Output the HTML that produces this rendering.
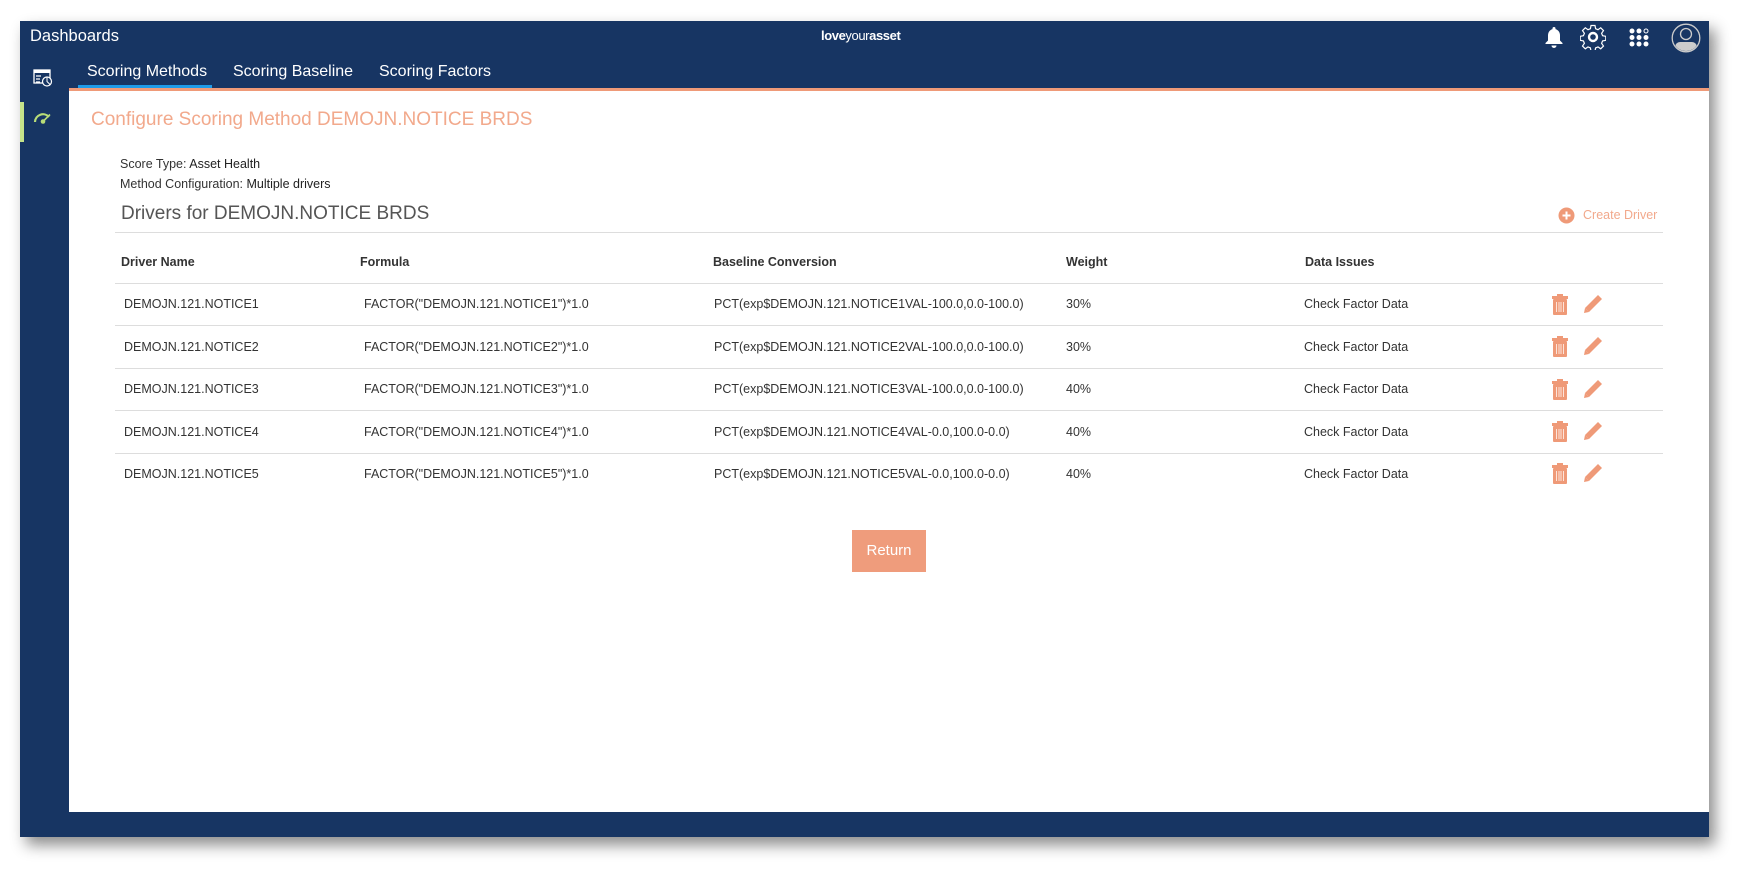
<!DOCTYPE html>
<html><head><meta charset="utf-8"><style>
*{margin:0;padding:0;box-sizing:border-box}
body{width:1750px;height:878px;background:#fff;position:relative;overflow:hidden;font-family:"Liberation Sans",sans-serif;color:#333}
.a{position:absolute;white-space:nowrap}
#frame{position:absolute;left:20px;top:21px;width:1689px;height:816px;background:#173563;box-shadow:6px 8px 14px rgba(0,0,0,.45)}
#white{position:absolute;left:69px;top:91px;width:1640px;height:721px;background:#fff}
.tab{color:#fff;font-size:16px;top:63px}
.t{font-size:12.5px;color:#333}
.h{font-size:12.5px;font-weight:bold;color:#333}
.ln{position:absolute;left:115px;width:1548px;height:1px;background:#ddd}
</style></head><body>
<div id="frame"></div>
<div class="a" style="left:69px;top:88px;width:1640px;height:3px;background:#ef9a78"></div>
<div id="white"></div>
<div class="a" style="left:30px;top:27px;color:#fff;font-size:16.5px">Dashboards</div>
<div class="a" style="left:821px;top:28px;color:#fff;font-size:13px;letter-spacing:-0.4px"><b>love</b>your<b>asset</b></div>
<svg class="a" style="left:1545px;top:26px" width="18" height="22" viewBox="0 0 18 22"><path d="M9 1a1.5 1.5 0 0 1 1.5 1.5v.6C13.5 4 15 6.5 15 9.5v5l2.5 2.5v1h-17v-1L3 14.5v-5C3 6.5 4.5 4 7.5 3.1v-.6A1.5 1.5 0 0 1 9 1zM6.5 19.5h5a2.5 2.5 0 0 1-5 0z" fill="#fff"/></svg>
<svg class="a" style="left:1580px;top:24px" width="26" height="26" viewBox="0 0 26 26"><path d="M11 1.5h4l.6 3.2 2.4 1 2.7-1.9 2.8 2.8-1.9 2.7 1 2.4 3.2.6v4l-3.2.6-1 2.4 1.9 2.7-2.8 2.8-2.7-1.9-2.4 1-.6 3.2h-4l-.6-3.2-2.4-1-2.7 1.9-2.8-2.8 1.9-2.7-1-2.4-3.2-.6v-4l3.2-.6 1-2.4-1.9-2.7 2.8-2.8 2.7 1.9 2.4-1z" fill="none" stroke="#fff" stroke-width="1.2"/><circle cx="13" cy="13" r="4" fill="none" stroke="#fff" stroke-width="2.4"/></svg>
<svg class="a" style="left:1629px;top:28px" width="22" height="19" viewBox="0 0 22 19"><g fill="#fff"><circle cx="3" cy="3" r="2.5"/><circle cx="10" cy="3" r="2.5"/><circle cx="3" cy="9.5" r="2.5"/><circle cx="10" cy="9.5" r="2.5"/><circle cx="17" cy="9.5" r="2.5"/><circle cx="3" cy="16" r="2.5"/><circle cx="10" cy="16" r="2.5"/><circle cx="17" cy="16" r="2.5"/></g><circle cx="17" cy="3" r="2" fill="none" stroke="#fff" stroke-width="1"/></svg>
<svg class="a" style="left:1671px;top:23px" width="30" height="30" viewBox="0 0 30 30"><defs><clipPath id="c"><circle cx="15" cy="15" r="13"/></clipPath></defs><circle cx="15" cy="15" r="13.8" fill="none" stroke="#ccc" stroke-width="1.3"/><circle cx="15" cy="11" r="5.5" fill="none" stroke="#ccc" stroke-width="1.3"/><rect x="4" y="19" width="22" height="12" rx="5" fill="#ccc" clip-path="url(#c)"/></svg>
<svg class="a" style="left:33px;top:69px" width="20" height="18" viewBox="0 0 20 18"><rect x="1" y="1" width="16" height="13" fill="none" stroke="#fff" stroke-width="1.3"/><rect x="1" y="1" width="16" height="3" fill="#fff"/><path d="M3 7h5M3 10h4M3 13h4" stroke="#fff" stroke-width="1.2"/><circle cx="14" cy="12.5" r="4.5" fill="#173563" stroke="#fff" stroke-width="1.2"/><path d="M14 8v4.5l3 3" stroke="#fff" stroke-width="1" fill="none"/></svg>
<div class="a" style="left:20px;top:102px;width:4px;height:40px;background:#c5e38a"></div>
<svg class="a" style="left:33px;top:111px" width="20" height="14" viewBox="0 0 20 14"><path d="M2 11a8 8 0 0 1 14-5" fill="none" stroke="#b8dd78" stroke-width="2.2"/><circle cx="10" cy="10.5" r="2.3" fill="#b8dd78"/><path d="M10 10.5l7-7" stroke="#b8dd78" stroke-width="1.6"/></svg>
<div class="a tab" style="left:87px">Scoring Methods</div>
<div class="a" style="left:78px;top:85px;width:134px;height:3px;background:#1f9be8"></div>
<div class="a tab" style="left:233px">Scoring Baseline</div>
<div class="a tab" style="left:379px">Scoring Factors</div>
<div class="a" style="left:91px;top:109px;font-size:19px;color:#f2a98c">Configure Scoring Method DEMOJN.NOTICE BRDS</div>
<div class="a t" style="left:120px;top:157px;font-size:12.5px">Score Type: <span style="color:#222">Asset Health</span></div>
<div class="a t" style="left:120px;top:177px;font-size:12.5px">Method Configuration: <span style="color:#222">Multiple drivers</span></div>
<div class="a" style="left:121px;top:203px;font-size:19px;color:#555">Drivers for DEMOJN.NOTICE BRDS</div>
<div class="ln" style="top:232px"></div>
<svg class="a" style="left:1558px;top:207px" width="17" height="17" viewBox="0 0 17 17"><circle cx="8.5" cy="8.5" r="8" fill="#ef9a78"/><path d="M8.5 4.5v8M4.5 8.5h8" stroke="#fff" stroke-width="2"/></svg>
<div class="a" style="left:1583px;top:208px;font-size:12.5px;color:#f2a98c">Create Driver</div>
<div class="a h" style="left:121px;top:255px">Driver Name</div>
<div class="a h" style="left:360px;top:255px">Formula</div>
<div class="a h" style="left:713px;top:255px">Baseline Conversion</div>
<div class="a h" style="left:1066px;top:255px">Weight</div>
<div class="a h" style="left:1305px;top:255px">Data Issues</div>
<div class="ln" style="top:283px"></div>
<div class="a t" style="left:124px;top:297px">DEMOJN.121.NOTICE1</div><div class="a t" style="left:364px;top:297px">FACTOR("DEMOJN.121.NOTICE1")*1.0</div><div class="a t" style="left:714px;top:297px">PCT(exp$DEMOJN.121.NOTICE1VAL-100.0,0.0-100.0)</div><div class="a t" style="left:1066px;top:297px">30%</div><div class="a t" style="left:1304px;top:297px">Check Factor Data</div><div class="ln" style="top:325px"></div>
<div class="a t" style="left:124px;top:340px">DEMOJN.121.NOTICE2</div><div class="a t" style="left:364px;top:340px">FACTOR("DEMOJN.121.NOTICE2")*1.0</div><div class="a t" style="left:714px;top:340px">PCT(exp$DEMOJN.121.NOTICE2VAL-100.0,0.0-100.0)</div><div class="a t" style="left:1066px;top:340px">30%</div><div class="a t" style="left:1304px;top:340px">Check Factor Data</div><div class="ln" style="top:368px"></div>
<div class="a t" style="left:124px;top:382px">DEMOJN.121.NOTICE3</div><div class="a t" style="left:364px;top:382px">FACTOR("DEMOJN.121.NOTICE3")*1.0</div><div class="a t" style="left:714px;top:382px">PCT(exp$DEMOJN.121.NOTICE3VAL-100.0,0.0-100.0)</div><div class="a t" style="left:1066px;top:382px">40%</div><div class="a t" style="left:1304px;top:382px">Check Factor Data</div><div class="ln" style="top:410px"></div>
<div class="a t" style="left:124px;top:425px">DEMOJN.121.NOTICE4</div><div class="a t" style="left:364px;top:425px">FACTOR("DEMOJN.121.NOTICE4")*1.0</div><div class="a t" style="left:714px;top:425px">PCT(exp$DEMOJN.121.NOTICE4VAL-0.0,100.0-0.0)</div><div class="a t" style="left:1066px;top:425px">40%</div><div class="a t" style="left:1304px;top:425px">Check Factor Data</div><div class="ln" style="top:453px"></div>
<div class="a t" style="left:124px;top:467px">DEMOJN.121.NOTICE5</div><div class="a t" style="left:364px;top:467px">FACTOR("DEMOJN.121.NOTICE5")*1.0</div><div class="a t" style="left:714px;top:467px">PCT(exp$DEMOJN.121.NOTICE5VAL-0.0,100.0-0.0)</div><div class="a t" style="left:1066px;top:467px">40%</div><div class="a t" style="left:1304px;top:467px">Check Factor Data</div>
<svg class="a" style="left:1552px;top:294px" width="16" height="21" viewBox="0 0 16 21"><rect x="5" y="0" width="6" height="2" fill="#ef9a78"/><rect x="0" y="2" width="16" height="3" fill="#ef9a78"/><rect x="1" y="5" width="14" height="16" rx="1" fill="#ef9a78"/><path d="M4.5 8v10M7 8v10M9 8v10M11.5 8v10" stroke="#fde4da" stroke-width="1"/></svg>
<svg class="a" style="left:1583px;top:294px" width="20" height="20" viewBox="0 0 20 20"><path d="M15 1l4 4L6 18l-4-4z" fill="#ef9a78"/><path d="M2 14l4 4-5 1z" fill="#ef9a78"/></svg>
<svg class="a" style="left:1552px;top:336px" width="16" height="21" viewBox="0 0 16 21"><rect x="5" y="0" width="6" height="2" fill="#ef9a78"/><rect x="0" y="2" width="16" height="3" fill="#ef9a78"/><rect x="1" y="5" width="14" height="16" rx="1" fill="#ef9a78"/><path d="M4.5 8v10M7 8v10M9 8v10M11.5 8v10" stroke="#fde4da" stroke-width="1"/></svg>
<svg class="a" style="left:1583px;top:336px" width="20" height="20" viewBox="0 0 20 20"><path d="M15 1l4 4L6 18l-4-4z" fill="#ef9a78"/><path d="M2 14l4 4-5 1z" fill="#ef9a78"/></svg>
<svg class="a" style="left:1552px;top:379px" width="16" height="21" viewBox="0 0 16 21"><rect x="5" y="0" width="6" height="2" fill="#ef9a78"/><rect x="0" y="2" width="16" height="3" fill="#ef9a78"/><rect x="1" y="5" width="14" height="16" rx="1" fill="#ef9a78"/><path d="M4.5 8v10M7 8v10M9 8v10M11.5 8v10" stroke="#fde4da" stroke-width="1"/></svg>
<svg class="a" style="left:1583px;top:379px" width="20" height="20" viewBox="0 0 20 20"><path d="M15 1l4 4L6 18l-4-4z" fill="#ef9a78"/><path d="M2 14l4 4-5 1z" fill="#ef9a78"/></svg>
<svg class="a" style="left:1552px;top:421px" width="16" height="21" viewBox="0 0 16 21"><rect x="5" y="0" width="6" height="2" fill="#ef9a78"/><rect x="0" y="2" width="16" height="3" fill="#ef9a78"/><rect x="1" y="5" width="14" height="16" rx="1" fill="#ef9a78"/><path d="M4.5 8v10M7 8v10M9 8v10M11.5 8v10" stroke="#fde4da" stroke-width="1"/></svg>
<svg class="a" style="left:1583px;top:421px" width="20" height="20" viewBox="0 0 20 20"><path d="M15 1l4 4L6 18l-4-4z" fill="#ef9a78"/><path d="M2 14l4 4-5 1z" fill="#ef9a78"/></svg>
<svg class="a" style="left:1552px;top:463px" width="16" height="21" viewBox="0 0 16 21"><rect x="5" y="0" width="6" height="2" fill="#ef9a78"/><rect x="0" y="2" width="16" height="3" fill="#ef9a78"/><rect x="1" y="5" width="14" height="16" rx="1" fill="#ef9a78"/><path d="M4.5 8v10M7 8v10M9 8v10M11.5 8v10" stroke="#fde4da" stroke-width="1"/></svg>
<svg class="a" style="left:1583px;top:463px" width="20" height="20" viewBox="0 0 20 20"><path d="M15 1l4 4L6 18l-4-4z" fill="#ef9a78"/><path d="M2 14l4 4-5 1z" fill="#ef9a78"/></svg>
<div class="a" style="left:852px;top:530px;width:74px;height:42px;background:#ef9c7c;color:#fff;font-size:15px;text-align:center;line-height:42px">Return</div>
</body></html>
